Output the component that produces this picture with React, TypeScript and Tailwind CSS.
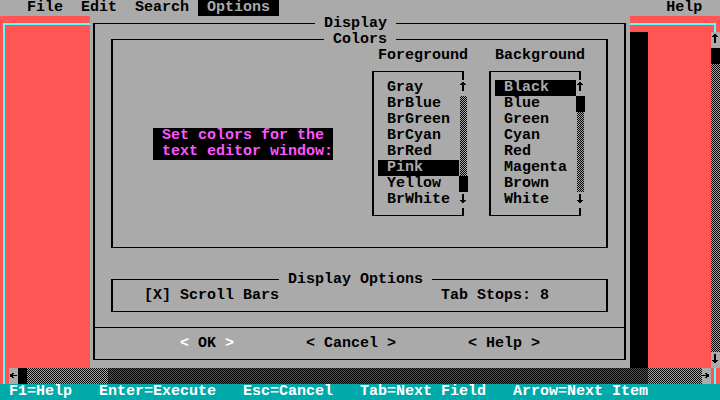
import React from "react";

const Dither = ({ dark = false, cls = "" }: { dark?: boolean; cls?: string }) => (
  <div
    className={
      (dark
        ? "bg-[image:repeating-conic-gradient(#555555_0_25%,#000000_0_50%)] "
        : "bg-[image:repeating-conic-gradient(#000000_0_25%,#aaaaaa_0_50%)] ") +
      "bg-[length:2px_2px] " +
      cls
    }
  />
);

type Dir = "up" | "down" | "left" | "right";
const rects: Record<Dir, [number, number, number, number][]> = {
  up: [
    [3, 2, 2, 9],
    [2, 3, 4, 1],
    [1, 4, 6, 1],
  ],
  down: [
    [3, 2, 2, 9],
    [1, 8, 6, 1],
    [2, 9, 4, 1],
  ],
  right: [
    [0, 7, 7, 1],
    [3, 5, 2, 1],
    [4, 6, 2, 1],
    [4, 8, 2, 1],
    [3, 9, 2, 1],
    [5, 6, 2, 3],
  ],
  left: [
    [1, 7, 7, 1],
    [3, 5, 2, 1],
    [2, 6, 2, 1],
    [2, 8, 2, 1],
    [3, 9, 2, 1],
    [1, 6, 2, 3],
  ],
};

const Arrow = ({ dir }: { dir: Dir }) => (
  <svg width="9" height="16" viewBox="0 0 9 16" shapeRendering="crispEdges" className="block">
    {rects[dir].map(([x, y, w, h], i) => (
      <rect key={i} x={x} y={y} width={w} height={h} fill="#000" />
    ))}
  </svg>
);

const fg = ["Gray", "BrBlue", "BrGreen", "BrCyan", "BrRed", "Pink", "Yellow", "BrWhite"];
const bgc = ["Black", "Blue", "Green", "Cyan", "Red", "Magenta", "Brown", "White"];

function ListItems({ items, sel }: { items: string[]; sel: number }) {
  return (
    <>
      {items.map((t, i) => (
        <div
          key={t}
          className={
            "h-4 whitespace-pre " + (i === sel ? "bg-black text-[#aaaaaa]" : "text-black")
          }
        >
          {" " + t}
        </div>
      ))}
    </>
  );
}

export default function App() {
  return (
    <div className="w-[720px] h-[400px] overflow-hidden bg-[#aaaaaa] grid grid-cols-[repeat(80,9px)] grid-rows-[repeat(25,16px)] font-['Liberation_Mono','DejaVu_Sans_Mono',monospace] text-[15px] leading-[16px] font-bold text-black">
      {/* menu bar */}
      <div className="row-start-1 col-start-1 col-end-[81] whitespace-pre flex">
        <span>{"   File  Edit  Search "}</span>
        <span className="bg-black text-[#aaaaaa]">{" Options "}</span>
        <span>{"                                           Help"}</span>
      </div>

      {/* editor window */}
      <div className="row-start-2 row-end-[25] col-start-1 col-end-[81] bg-[#ff5555]" />
      <div className="row-start-2 row-end-[25] col-start-1 col-end-[81] ml-[3px] mt-[7px] mr-[4px] border-l-2 border-r-2 border-t-2 border-[#55ffff]" />

      {/* vertical scrollbar */}
      <div className="col-start-[80] row-start-3 row-end-[24] flex flex-col">
        <div className="h-4 bg-[#aaaaaa]"><Arrow dir="up" /></div>
        <div className="h-4 bg-black" />
        <Dither cls="flex-1" />
        <div className="h-4 bg-[#aaaaaa]"><Arrow dir="down" /></div>
      </div>

      {/* horizontal scrollbar */}
      <div className="row-start-[24] col-start-2 col-end-[80] flex">
        <div className="w-[9px] bg-[#aaaaaa]"><Arrow dir="left" /></div>
        <div className="w-[9px] bg-black" />
        <Dither cls="flex-1" />
        <div className="w-[9px] bg-[#aaaaaa]"><Arrow dir="right" /></div>
      </div>

      {/* shadow */}
      <div className="col-start-[71] col-end-[73] row-start-3 row-end-[24] bg-black" />
      <Dither dark cls="row-start-[24] col-start-[13] col-end-[73]" />

      {/* dialog */}
      <div className="col-start-[11] col-end-[71] row-start-2 row-end-[24] bg-[#aaaaaa] grid grid-cols-[repeat(60,9px)] grid-rows-[repeat(22,16px)]">
        {/* frame */}
        <div className="col-start-1 col-end-[61] row-start-1 row-end-[23] ml-[3px] mt-[7px] mr-[4px] mb-[8px] border-x-2 border-y border-black" />
        <div className="col-start-1 col-end-[61] row-start-[20] self-start h-px mt-[7px] ml-[3px] mr-[4px] bg-black" />
        <div className="col-start-[26] col-end-[35] row-start-1 bg-[#aaaaaa] whitespace-pre">{" Display "}</div>

        {/* colors group */}
        <div className="col-start-3 col-end-[59] row-start-2 row-end-[16] ml-[3px] mt-[7px] mr-[4px] mb-[8px] border-x-2 border-y border-black" />
        <div className="col-start-[27] col-end-[35] row-start-2 bg-[#aaaaaa] whitespace-pre">{" Colors "}</div>
        <div className="col-start-[33] col-end-[43] row-start-3 whitespace-pre">Foreground</div>
        <div className="col-start-[46] col-end-[56] row-start-3 whitespace-pre">Background</div>

        {/* foreground list */}
        <div className="col-start-[32] col-end-[43] row-start-4 row-end-[14] ml-[3px] mt-[7px] mr-[4px] mb-[8px] border-x-2 border-y border-black" />
        <div className="col-start-[33] col-end-[42] row-start-5 row-end-[13] flex flex-col">
          <ListItems items={fg} sel={5} />
        </div>
        <div className="col-start-[42] row-start-5 row-end-[13] flex flex-col bg-[#aaaaaa]">
          <div className="h-4"><Arrow dir="up" /></div>
          <Dither cls="h-[80px] mx-[1px]" />
          <div className="h-4 bg-black" />
          <div className="h-4"><Arrow dir="down" /></div>
        </div>

        {/* background list */}
        <div className="col-start-[45] col-end-[56] row-start-4 row-end-[14] ml-[3px] mt-[7px] mr-[4px] mb-[8px] border-x-2 border-y border-black" />
        <div className="col-start-[46] col-end-[55] row-start-5 row-end-[13] flex flex-col">
          <ListItems items={bgc} sel={0} />
        </div>
        <div className="col-start-[55] row-start-5 row-end-[13] flex flex-col bg-[#aaaaaa]">
          <div className="h-4"><Arrow dir="up" /></div>
          <div className="h-4 bg-black" />
          <Dither cls="h-[80px] mx-[1px]" />
          <div className="h-4"><Arrow dir="down" /></div>
        </div>

        {/* prompt */}
        <div className="col-start-8 col-end-[28] row-start-8 row-end-[10] bg-black text-[#ff55ff] whitespace-pre flex flex-col">
          <div className="h-4">{" Set colors for the "}</div>
          <div className="h-4">{" text editor window:"}</div>
        </div>

        {/* display options group */}
        <div className="col-start-3 col-end-[59] row-start-[17] row-end-[20] ml-[3px] mt-[7px] mr-[4px] mb-[8px] border-x-2 border-y border-black" />
        <div className="col-start-[22] col-end-[39] row-start-[17] bg-[#aaaaaa] whitespace-pre">{" Display Options "}</div>
        <div className="col-start-7 col-end-[22] row-start-[18] whitespace-pre">[X] Scroll Bars</div>
        <div className="col-start-[40] col-end-[52] row-start-[18] whitespace-pre">Tab Stops: 8</div>

        {/* buttons */}
        <div className="col-start-[11] col-end-[17] row-start-[21] whitespace-pre">
          <span className="text-white">{"<"}</span>
          {" OK "}
          <span className="text-white">{">"}</span>
        </div>
        <div className="col-start-[25] col-end-[35] row-start-[21] whitespace-pre">{"< Cancel >"}</div>
        <div className="col-start-[43] col-end-[51] row-start-[21] whitespace-pre">{"< Help >"}</div>
      </div>

      {/* status bar */}
      <div className="row-start-[25] col-start-1 col-end-[81] bg-[#00aaaa] text-white whitespace-pre">
        {" F1=Help   Enter=Execute   Esc=Cancel   Tab=Next Field   Arrow=Next Item"}
      </div>
    </div>
  );
}
